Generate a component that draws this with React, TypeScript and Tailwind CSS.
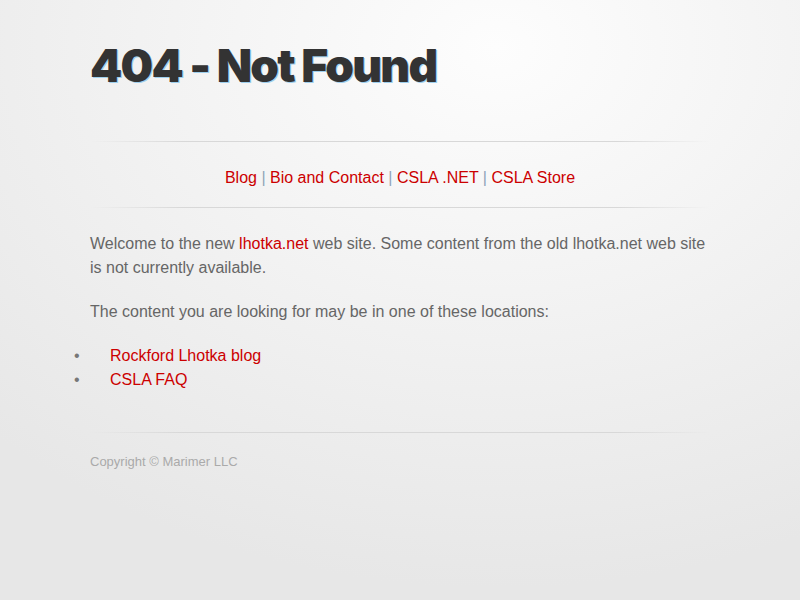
import React from 'react';

const navLinks = ['Blog', 'Bio and Contact', 'CSLA .NET', 'CSLA Store'];

const Rule = () => (
  <div className="h-px w-full bg-[linear-gradient(to_right,rgba(210,210,210,0),#d8d8d8_15%,#d8d8d8_85%,rgba(210,210,210,0))]" />
);

const App = () => {
  return (
    <div className="min-h-[600px] w-full bg-[radial-gradient(ellipse_90%_90%_at_62%_8%,#fdfdfd_0%,#f3f3f3_45%,#e7e7e7_100%)] font-['Liberation_Sans',Arial,sans-serif]">
      <div className="mx-auto w-[620px]">
        <h1 className="pt-[37px] pb-[47px] font-['Inter',sans-serif] text-[46px] leading-[57px] font-black tracking-[-1.8px] text-[#333] [text-shadow:1px_1px_0_#9fd0ee]">
          404 - Not Found
        </h1>
        <Rule />
        <nav className="pt-[27px] pb-[20px] text-center text-[16px] leading-[18px] text-[#8fa4b8]">
          {navLinks.map((l, i) => (
            <React.Fragment key={l}>
              {i > 0 && <span> | </span>}
              <a href="#" className="text-[#cc0000]">{l}</a>
            </React.Fragment>
          ))}
        </nav>
        <Rule />
        <div className="pt-[24px] text-[16px] leading-[24px] text-[#666]">
          <p>
            Welcome to the new <a href="#" className="text-[#cc0000]">lhotka.net</a> web site. Some content from the old lhotka.net web site is not currently available.
          </p>
          <p className="mt-[20px]">The content you are looking for may be in one of these locations:</p>
          <ul className="mt-[20px] -ml-[16px]">
            <li className="flex">
              <span className="w-[36px] text-[#777]">•</span>
              <a href="#" className="text-[#cc0000]">Rockford Lhotka blog</a>
            </li>
            <li className="flex">
              <span className="w-[36px] text-[#777]">•</span>
              <a href="#" className="text-[#cc0000]">CSLA FAQ</a>
            </li>
          </ul>
        </div>
        <div className="mt-[40px]"><Rule /></div>
        <p className="pt-[21px] text-[13px] leading-[16px] text-[#aaa]">Copyright © Marimer LLC</p>
      </div>
    </div>
  );
};

export default App;
